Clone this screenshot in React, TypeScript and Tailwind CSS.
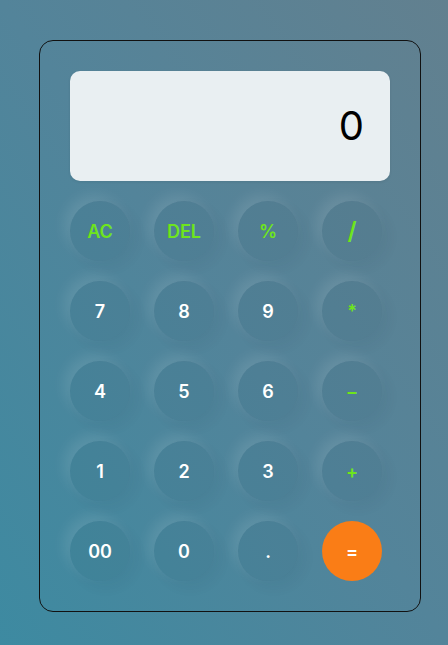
import React from "react";

type Key = { label: string; kind: "num" | "op" | "eq" };

const keys: Key[] = [
  { label: "AC", kind: "op" },
  { label: "DEL", kind: "op" },
  { label: "%", kind: "op" },
  { label: "/", kind: "op" },
  { label: "7", kind: "num" },
  { label: "8", kind: "num" },
  { label: "9", kind: "num" },
  { label: "*", kind: "op" },
  { label: "4", kind: "num" },
  { label: "5", kind: "num" },
  { label: "6", kind: "num" },
  { label: "-", kind: "op" },
  { label: "1", kind: "num" },
  { label: "2", kind: "num" },
  { label: "3", kind: "num" },
  { label: "+", kind: "op" },
  { label: "00", kind: "num" },
  { label: "0", kind: "num" },
  { label: ".", kind: "num" },
  { label: "=", kind: "eq" },
];

const base =
  "w-[60px] h-[60px] rounded-full flex items-center justify-center font-semibold";
const soft =
  "bg-[rgba(0,40,60,0.05)] shadow-[-6px_-6px_14px_rgba(255,255,255,0.1),6px_6px_14px_rgba(0,30,50,0.05)]";

export default function App() {
  return (
    <div
      className="w-[448px] h-[645px] overflow-hidden bg-[linear-gradient(to_top_right,#3d8aa1,#53849a_50%,#62808f)] pt-[40px] pl-[39px]"
      style={{ fontFamily: "Inter, 'Noto Sans', sans-serif" }}
    >
      <div className="w-[382px] h-[572px] rounded-[14px] border border-[#111] p-[30px] flex flex-col gap-[20px]">
        <div className="h-[110px] rounded-[10px] bg-[#e9eff2] flex items-center justify-end pr-[26px] shadow-[0_1px_3px_rgba(0,0,0,0.08)]">
          <span className="text-[40px] leading-none text-black font-normal">0</span>
        </div>
        <div className="grid grid-cols-[repeat(4,60px)] gap-x-[24px] gap-y-[20px]">
          {keys.map((k) => (
            <button
              key={k.label}
              className={
                k.kind === "eq"
                  ? `${base} bg-[#fa7d16] text-white text-[18px]`
                  : k.kind === "op"
                  ? `${base} ${soft} text-[#6ee51c] ${k.label === "/" ? "text-[24px] font-medium" : "text-[18px]"}`
                  : `${base} ${soft} text-white text-[18px]`
              }
            >
              {k.label === "-" ? "–" : k.label}
            </button>
          ))}
        </div>
      </div>
    </div>
  );
}
